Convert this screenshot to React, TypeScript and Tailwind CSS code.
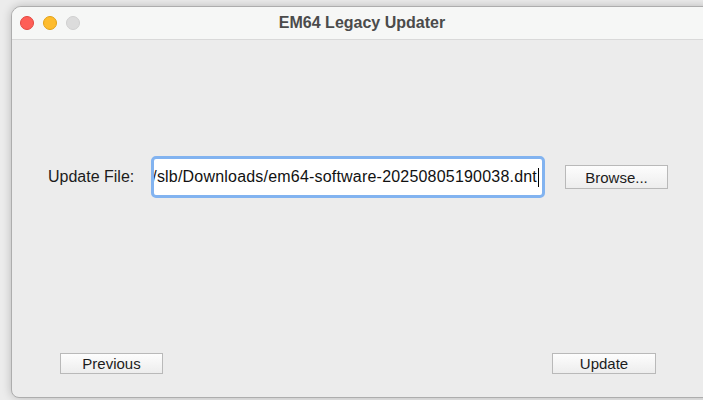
import React from "react";

const font = { fontFamily: '"Liberation Sans", Arial, sans-serif' };

function MacButton({ label, className }: { label: string; className: string }) {
  return (
    <div
      className={`flex items-center justify-center border border-[#b9b9b9] bg-gradient-to-b from-[#fdfdfd] to-[#ededed] text-[15px] leading-none text-[#1c1c1c] ${className}`}
    >
      {label}
    </div>
  );
}

export default function App() {
  return (
    <div
      className="w-[703px] h-[400px] overflow-hidden bg-[#ececec] pt-[6px] pl-[11px]"
      style={font}
    >
      <div className="w-[702px] h-[392px] flex flex-col rounded-t-[10px] rounded-b-[8px] border border-[#adadad] bg-[#ececec] overflow-hidden shadow-[0_0_10px_rgba(0,0,0,0.22)]">
        {/* title bar */}
        <div className="relative h-[33px] shrink-0 flex items-center justify-center bg-[#f6f7f6] border-b border-[#d9d9d9]">
          <div className="absolute left-[8px] top-[9px] flex gap-[9px]">
            <span className="w-[14px] h-[14px] rounded-full bg-[#fe5f57] border border-[#e2463f]" />
            <span className="w-[14px] h-[14px] rounded-full bg-[#febc2e] border border-[#e1a116]" />
            <span className="w-[14px] h-[14px] rounded-full bg-[#dcdcdc] border border-[#cfcfcf]" />
          </div>
          <span className="text-[16px] font-bold text-[#4b4b4b]">EM64 Legacy Updater</span>
        </div>

        {/* body */}
        <div className="flex-1 flex flex-col pt-[116px] pb-[23px]">
          <div className="flex items-center pl-[36px]">
            <span className="w-[103px] text-[16px] text-[#1c1c1c]">Update File:</span>
            <div className="w-[394px] h-[42px] rounded-[5px] border-[3px] border-[#82b3f0] bg-white flex items-center justify-end overflow-hidden pr-[3px]">
              <span className="whitespace-nowrap text-[16px] tracking-[0.2px] text-[#111]">
                /slb/Downloads/em64-software-20250805190038.dnt
              </span>
              <span className="w-[1px] h-[19px] bg-black ml-[1px] shrink-0" />
            </div>
            <MacButton label="Browse..." className="ml-[20px] w-[103px] h-[24px]" />
          </div>

          <div className="mt-auto flex justify-between pl-[48px] pr-[56px]">
            <MacButton label="Previous" className="w-[103px] h-[21px]" />
            <MacButton label="Update" className="w-[104px] h-[21px]" />
          </div>
        </div>
      </div>
    </div>
  );
}
